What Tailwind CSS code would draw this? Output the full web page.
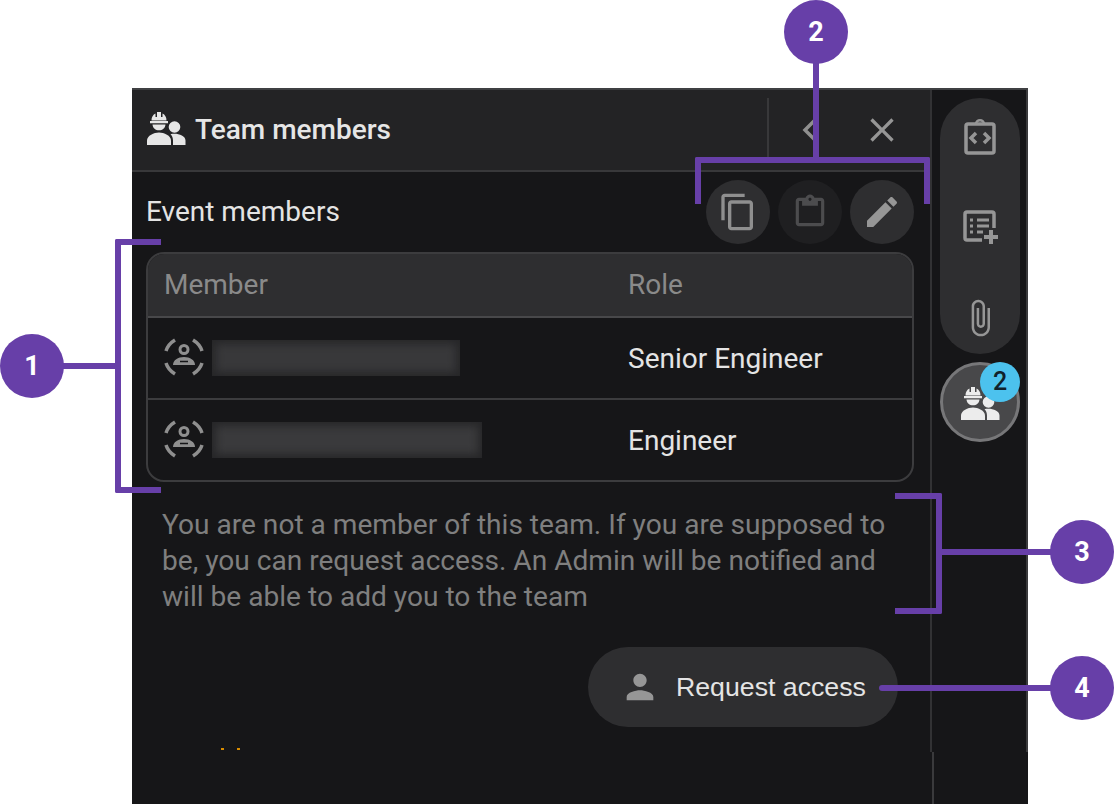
<!DOCTYPE html>
<html lang="en">
<head>
  <meta charset="UTF-8" />
  <meta name="viewport" content="width=device-width, initial-scale=1.0" />
  <title>Team members</title>
  <script src="https://cdn.jsdelivr.net/npm/@tailwindcss/browser@4"></script>
</head>
<body class="bg-white font-['Roboto',sans-serif]">
  <div class="relative w-[1114px] h-[804px] overflow-hidden pl-[132px] pt-[88px]">

    <!-- app window -->
    <div class="w-[896px] h-[716px] flex bg-[#161618] border-t-2 border-[#3f4043]">

      <!-- main panel -->
      <div class="w-[800px] border-r-2 border-[#323234] h-[662px] shrink-0">
        <div class="h-[82px] bg-[#232325] border-b-2 border-[#38383a] flex items-center pl-[15px]">
          <svg class="w-[39px] h-[34px] text-[#e6e6e6] mt-[-2px]" viewBox="0 0 39 34" fill="currentColor">
            <path d="M3 9h18v2.200H3zM4.500 8.500c0-3.500 1.500-5.800 4-7V5H10V0h4v5h1.500V1.500c2.500 1.200 4 3.500 4 7z"/>
            <path d="M5.500 12.500h13c-.3 3.600-3 5.800-6.500 5.800s-6.200-2.200-6.500-5.800z"/>
            <path d="M0 33v-4.500c0-5 7-8 12-8s12 3 12 8V33z"/>
            <circle cx="27.500" cy="15" r="5.800"/>
            <path d="M26 33v-4.500c0-2.500-.8-4.700-2.500-6.300 5.500-1.500 15 .6 15 6.300V33z"/>
          </svg>
          <span class="ml-[9px] text-[28px] font-medium text-[#e6e6e6] leading-none mt-[-1px]">Team members</span>
          <div class="ml-auto w-[2px] h-[62px] bg-[#38383a] self-start mt-[8px]"></div>
          <svg class="w-[14px] h-[26px] ml-[33px] text-[#8f8f8f] mt-[-1px]" viewBox="0 0 14 26" fill="none" stroke="currentColor" stroke-width="3.500"><path d="M13 3 3 13l10 10"/></svg>
          <svg class="w-[40px] h-[40px] ml-[46px] mr-[28px] text-[#969696] mt-0" viewBox="0 0 24 24" fill="currentColor"><path d="M19 6.410 17.590 5 12 10.590 6.410 5 5 6.410 10.590 12 5 17.590 6.410 19 12 13.410 17.590 19 19 17.590 13.410 12z"/></svg>
        </div>

        <div class="pl-[14px] pr-[16px]">
          <div class="h-[80px] flex items-center">
            <span class="text-[28px] text-[#e4e4e4] leading-none">Event members</span>
            <div class="ml-auto flex gap-2">
              <button class="w-16 h-16 rounded-full bg-[#2e2e30] flex items-center justify-center">
                <svg class="w-[40px] h-[40px] text-[#8f8f8f]" viewBox="0 0 24 24" fill="currentColor"><path d="M16 1H4c-1.100 0-2 .9-2 2v14h2V3h12V1zm3 4H8c-1.100 0-2 .9-2 2v14c0 1.100.9 2 2 2h11c1.100 0 2-.9 2-2V7c0-1.100-.9-2-2-2zm0 16H8V7h11v14z"/></svg>
              </button>
              <button class="w-16 h-16 rounded-full bg-[#1f1f21] flex items-center justify-center">
                <svg class="w-[38px] h-[38px] text-[#4c4c4e]" viewBox="0 0 24 24" fill="currentColor"><path d="M19 3h-4.180C14.400 1.840 13.300 1 12 1c-1.300 0-2.400.84-2.820 2H5c-1.100 0-2 .9-2 2v14c0 1.100.9 2 2 2h14c1.100 0 2-.9 2-2V5c0-1.100-.9-2-2-2zm-7 0c.55 0 1 .45 1 1s-.45 1-1 1-1-.45-1-1 .45-1 1-1zm7 16H5V5h2v3h10V5h2v14z"/></svg>
              </button>
              <button class="w-16 h-16 rounded-full bg-[#2e2e30] flex items-center justify-center">
                <svg class="w-[40px] h-[40px] text-[#969696]" viewBox="0 0 24 24" fill="currentColor"><path d="M3 17.250V21h3.750L17.810 9.940l-3.750-3.750L3 17.250zM20.710 7.040c.39-.39.39-1.020 0-1.410l-2.340-2.340c-.39-.39-1.020-.39-1.410 0l-1.830 1.830 3.750 3.750 1.830-1.830z"/></svg>
              </button>
            </div>
          </div>

          <!-- members table -->
          <div class="w-[768px] h-[230px] border-2 border-[#3c3c3e] rounded-[18px] overflow-hidden">
            <div class="h-[64px] bg-[#2e2e30] border-b-2 border-[#48484a] flex items-center text-[28px] text-[#8a8a8a]">
              <span class="pl-[16px] w-[480px]">Member</span>
              <span>Role</span>
            </div>
            <div class="h-[82px] border-b-2 border-[#3c3c3e] flex items-center text-[28px] text-[#e4e4e4]">
              <div class="w-[480px] flex items-center pl-[16px]">
                <svg class="w-[40px] h-[38px] text-[#8f8f8f] shrink-0 mt-[-2px]" viewBox="0 0 40 38" fill="none" stroke="currentColor" stroke-width="3.500">
                  <path d="M2 13C3.500 8 6 5 11 2M29 2c5 3 7.500 6 9 11M2 25c1.500 5 4 8 9 11M29 36c5-3 7.500-6 9-11"/>
                  <circle cx="20" cy="11.500" r="4" stroke-width="3"/>
                  <path d="M9 27c0-5 5-8 11-8s11 3 11 8z" fill="currentColor" stroke="none"/>
                  <path d="M16 23.500h8" stroke="#161618" stroke-width="1.500"/>
                </svg>
                <div class="ml-[8px] w-[248px] h-[36px] bg-[#262628] overflow-hidden p-1">
                  <div class="w-full h-full bg-[#38383a] blur-[4px]"></div>
                </div>
              </div>
              <span class="mt-[2px]">Senior Engineer</span>
            </div>
            <div class="h-[80px] flex items-center text-[28px] text-[#e4e4e4]">
              <div class="w-[480px] flex items-center pl-[16px]">
                <svg class="w-[40px] h-[38px] text-[#8f8f8f] shrink-0 mt-[-2px]" viewBox="0 0 40 38" fill="none" stroke="currentColor" stroke-width="3.500">
                  <path d="M2 13C3.500 8 6 5 11 2M29 2c5 3 7.500 6 9 11M2 25c1.500 5 4 8 9 11M29 36c5-3 7.500-6 9-11"/>
                  <circle cx="20" cy="11.500" r="4" stroke-width="3"/>
                  <path d="M9 27c0-5 5-8 11-8s11 3 11 8z" fill="currentColor" stroke="none"/>
                  <path d="M16 23.500h8" stroke="#161618" stroke-width="1.500"/>
                </svg>
                <div class="ml-[8px] w-[270px] h-[36px] bg-[#262628] overflow-hidden p-1">
                  <div class="w-full h-full bg-[#3a3a3c] blur-[4px]"></div>
                </div>
              </div>
              <span class="mt-[2px]">Engineer</span>
            </div>
          </div>

          <p class="pl-[16px] mt-[25px] w-[745px] text-[28.1px] leading-[36px] text-[#7f7f7f]">You are not a member of this team. If you are supposed to be, you can request access. An Admin will be notified and will be able to add you to the team</p>

          <div class="mt-[32px] flex justify-end pr-[16px]">
            <button class="w-[310px] h-[80px] rounded-full bg-[#2e2e30] flex items-center pl-[32px]">
              <svg class="w-[40px] h-[40px] text-[#969696] shrink-0" viewBox="0 0 24 24" fill="currentColor"><path d="M12 12c2.210 0 4-1.790 4-4s-1.790-4-4-4-4 1.790-4 4 1.790 4 4 4zm0 2c-2.670 0-8 1.340-8 4v2h16v-2c0-2.660-5.330-4-8-4z"/></svg>
              <span class="ml-[16px] text-[26.7px] text-[#e4e4e4] font-['Liberation_Sans',sans-serif]">Request access</span>
            </button>
          </div>
        </div>
      </div>

      <!-- right rail -->
      <div class="flex-1 h-[662px] border-r-2 border-[#3a3a3c] pl-[8px] pt-[8px]">
        <div class="w-[80px] h-[256px] rounded-full bg-[#2e2e30] flex flex-col items-center justify-between py-[18px]">
          <svg class="w-[36px] h-[38px] text-[#969696] mt-[2px]" viewBox="0 0 36 38" fill="none" stroke="currentColor" stroke-width="3.500">
            <rect x="4" y="6" width="28" height="29" rx="2"/>
            <path d="M14 6c0-5 8-5 8 0" stroke-width="2.500"/>
            <path d="m14 15-5 5 5 5M22 15l5 5-5 5"/>
          </svg>
          <svg class="w-[36px] h-[36px] text-[#969696]" viewBox="0 0 36 36" fill="none" stroke="currentColor" stroke-width="3.500">
            <path d="M20 31H5a2 2 0 0 1-2-2V5a2 2 0 0 1 2-2h25a2 2 0 0 1 2 2v14"/>
            <path d="M8 11h3M15 11h12M8 17h3M15 17h12M8 23h3M15 23h6" stroke-width="3"/>
            <path d="M29 21v14M22 28h14" stroke-width="4"/>
          </svg>
          <svg class="w-[40px] h-[40px] text-[#969696] mb-[-2px]" viewBox="0 0 24 24" fill="currentColor"><path d="M16.500 6v11.500c0 2.210-1.790 4-4 4s-4-1.790-4-4V5c0-1.380 1.120-2.500 2.500-2.500s2.500 1.120 2.500 2.500v10.500c0 .55-.45 1-1 1s-1-.45-1-1V6H10v9.500c0 1.380 1.120 2.500 2.500 2.500s2.500-1.120 2.500-2.500V5c0-2.210-1.790-4-4-4S7 2.790 7 5v12.500c0 3.040 2.460 5.500 5.500 5.500s5.500-2.460 5.500-5.500V6h-1.500z"/></svg>
        </div>
        <div class="relative mt-[8px] w-[80px] h-[80px] rounded-full bg-[#48484a] border-[3px] border-[#777779] flex items-center justify-center">
          <svg class="w-[39px] h-[34px] text-[#ececec] mt-[4px]" viewBox="0 0 39 34" fill="currentColor">
            <path d="M3 9h18v2.200H3zM4.500 8.500c0-3.500 1.500-5.800 4-7V5H10V0h4v5h1.500V1.500c2.500 1.200 4 3.500 4 7z"/>
            <path d="M5.500 12.500h13c-.3 3.600-3 5.800-6.500 5.800s-6.200-2.200-6.500-5.800z"/>
            <path d="M0 33v-4.500c0-5 7-8 12-8s12 3 12 8V33z"/>
            <circle cx="27.500" cy="15" r="5.800"/>
            <path d="M26 33v-4.500c0-2.500-.8-4.700-2.500-6.300 5.500-1.500 15 .6 15 6.300V33z"/>
          </svg>
          <span class="absolute right-[-3px] top-[-3px] w-10 h-10 rounded-full bg-[#4cc2ee] flex items-center justify-center text-[25px] font-medium text-[#10222c]">2</span>
        </div>
      </div>
    </div>

    <!-- bottom seam and stray marks -->
    <div class="absolute left-[932px] top-[752px] w-[2px] h-[52px] bg-[#3a3a3c]"></div>
    <div class="absolute left-[221px] top-[748px] w-[3px] h-[2px] bg-[#d98c00]"></div>
    <div class="absolute left-[237px] top-[748px] w-[3px] h-[2px] bg-[#d98c00]"></div>

    <!-- callout 1 -->
    <div class="absolute left-[115px] top-[239px] w-[46px] h-[254px] border-l-[6px] border-y-[6px] border-[#673fa8] rounded-l-[2px]"></div>
    <div class="absolute left-[60px] top-[363px] w-[56px] h-[6px] bg-[#673fa8]"></div>
    <div class="absolute left-0 top-[334px] w-16 h-16 rounded-full bg-[#673fa8] flex items-center justify-center text-white text-[27px] font-bold">1</div>

    <!-- callout 2 -->
    <div class="absolute left-[695px] top-[157px] w-[235px] h-[47px] border-t-[6px] border-x-[6px] border-[#673fa8] rounded-t-[2px]"></div>
    <div class="absolute left-[813px] top-[60px] w-[6px] h-[98px] bg-[#673fa8]"></div>
    <div class="absolute left-[784px] top-0 w-16 h-16 rounded-full bg-[#673fa8] flex items-center justify-center text-white text-[27px] font-bold">2</div>

    <!-- callout 3 -->
    <div class="absolute left-[895px] top-[493px] w-[47px] h-[121px] border-r-[6px] border-y-[6px] border-[#673fa8] rounded-r-[2px]"></div>
    <div class="absolute left-[942px] top-[549px] w-[112px] h-[6px] bg-[#673fa8]"></div>
    <div class="absolute left-[1050px] top-[520px] w-16 h-16 rounded-full bg-[#673fa8] flex items-center justify-center text-white text-[27px] font-bold">3</div>

    <!-- callout 4 -->
    <div class="absolute left-[879px] top-[685px] w-[175px] h-[6px] rounded-l-full bg-[#673fa8]"></div>
    <div class="absolute left-[1050px] top-[656px] w-16 h-16 rounded-full bg-[#673fa8] flex items-center justify-center text-white text-[27px] font-bold">4</div>
  </div>
</body>
</html>
